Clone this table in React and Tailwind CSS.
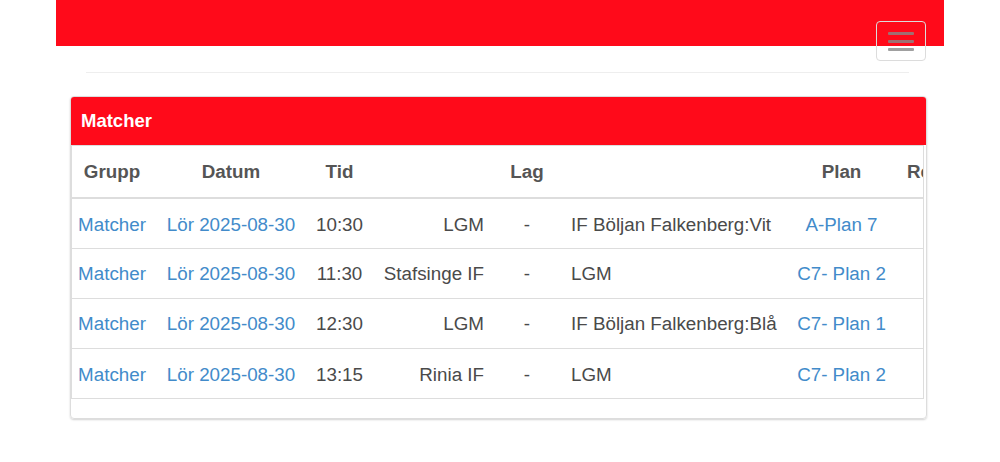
import React from "react";

const rows = [
  { time: "10:30", home: "LGM", away: "IF Böljan Falkenberg:Vit", plan: "A-Plan 7" },
  { time: "11:30", home: "Stafsinge IF", away: "LGM", plan: "C7- Plan 2" },
  { time: "12:30", home: "LGM", away: "IF Böljan Falkenberg:Blå", plan: "C7- Plan 1" },
  { time: "13:15", home: "Rinia IF", away: "LGM", plan: "C7- Plan 2" },
];

export default function App() {
  return (
    <div
      className="w-[1000px] h-[462px] bg-white overflow-hidden"
      style={{ fontFamily: '"Liberation Sans", Arial, sans-serif' }}
    >
      <div className="relative">
        <div className="mx-[56px] h-[46px] bg-[#ff0a1a]" />
        <div className="absolute left-[876px] top-[21px] w-[50px] h-[40px] rounded-[4px] border border-[#dcdcdc] flex flex-col items-center justify-center gap-[5px]">
          <span className="block w-[26px] h-[3px] rounded-[1px] bg-[#888]/80" />
          <span className="block w-[26px] h-[3px] rounded-[1px] bg-[#888]/80" />
          <span className="block w-[26px] h-[3px] rounded-[1px] bg-[#888]/80" />
        </div>
      </div>

      <div className="mx-[86px] mt-[26px] w-[823px] h-px bg-[#eeeeee]" />

      <div className="ml-[70px] mt-[23px] w-[857px] border border-[#dddddd] rounded-[4px] shadow-[0_1px_2px_rgba(0,0,0,0.18)] overflow-hidden">
        <div className="h-[48px] bg-[#ff0a1a] flex items-center pl-[10px]">
          <span className="text-white font-bold text-[18.5px]">Matcher</span>
        </div>
        <div className="mr-[2px] border border-[#dddddd] overflow-hidden">
          <table className="table-fixed border-collapse w-[921px] text-[18.8px]">
            <colgroup>
              <col className="w-[80px]" />
              <col className="w-[158px]" />
              <col className="w-[59px]" />
              <col className="w-[123px]" />
              <col className="w-[70px]" />
              <col className="w-[228px]" />
              <col className="w-[103px]" />
              <col className="w-[100px]" />
            </colgroup>
            <thead>
              <tr className="h-[52px] border-b-2 border-[#dddddd] text-[#555] font-bold">
                <th className="text-center font-bold pt-[2px]">Grupp</th>
                <th className="text-center font-bold pt-[2px]">Datum</th>
                <th className="text-center font-bold pt-[2px]">Tid</th>
                <th />
                <th className="text-center font-bold pt-[2px]">Lag</th>
                <th />
                <th className="text-center font-bold pt-[2px]">Plan</th>
                <th className="text-left pl-[14px] pt-[2px] font-bold whitespace-nowrap">Resultat</th>
              </tr>
            </thead>
            <tbody>
              {rows.map((r, i) => (
                <tr
                  key={i}
                  className={
                    "h-[50px] text-[#4a4a4a] " + (i > 0 ? "border-t border-[#dddddd]" : "")
                  }
                >
                  <td className="text-center pt-[3px] text-[#428bca] whitespace-nowrap">Matcher</td>
                  <td className="text-center pt-[3px] text-[#428bca] whitespace-nowrap">Lör 2025-08-30</td>
                  <td className="text-center pt-[3px] whitespace-nowrap">{r.time}</td>
                  <td className="text-right pt-[3px] pr-[8px] whitespace-nowrap">{r.home}</td>
                  <td className="text-center pt-[3px]">-</td>
                  <td className="text-left pt-[3px] pl-[9px] whitespace-nowrap">{r.away}</td>
                  <td className="text-center pt-[3px] text-[#428bca] whitespace-nowrap">{r.plan}</td>
                  <td />
                </tr>
              ))}
            </tbody>
          </table>
        </div>
        <div className="h-[19px]" />
      </div>
    </div>
  );
}
